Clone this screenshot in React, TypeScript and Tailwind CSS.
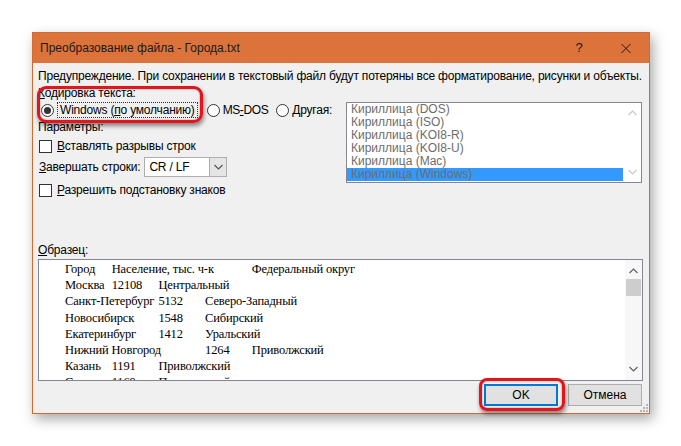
import React from 'react';

const ui = { fontFamily: '"Liberation Sans", Arial, sans-serif' };
const serif = { fontFamily: '"Liberation Serif", "Times New Roman", serif' };

const encodings = [
  'Кириллица (DOS)',
  'Кириллица (ISO)',
  'Кириллица (KOI8-R)',
  'Кириллица (KOI8-U)',
  'Кириллица (Mac)',
  'Кириллица (Windows)',
];

// each cell: [text, how many tab columns it takes]
const TAB = 46.7;
const sampleRows: [string, number][][] = [
  [['Город', 1], ['Население, тыс. ч-к', 3], ['Федеральный округ', 0]],
  [['Москва', 1], ['12108', 1], ['Центральный', 0]],
  [['Санкт-Петербург', 2], ['5132', 1], ['Северо-Западный', 0]],
  [['Новосибирск', 2], ['1548', 1], ['Сибирский', 0]],
  [['Екатеринбург', 2], ['1412', 1], ['Уральский', 0]],
  [['Нижний Новгород', 3], ['1264', 1], ['Приволжский', 0]],
  [['Казань', 1], ['1191', 1], ['Приволжский', 0]],
  [['Самара', 1], ['1169', 1], ['Приволжский', 0]],
];

function Radio({ checked }: { checked?: boolean }) {
  return (
    <span className="flex h-[13px] w-[13px] shrink-0 items-center justify-center rounded-full border border-[#333] bg-white">
      {checked && <span className="h-[7px] w-[7px] rounded-full bg-[#333]" />}
    </span>
  );
}

function Checkbox() {
  return <span className="block h-[13px] w-[13px] shrink-0 border border-[#333] bg-white" />;
}

function Chevron({ up, color }: { up?: boolean; color: string }) {
  return (
    <svg width="9" height="6" viewBox="0 0 9 6" className="block">
      <path d={up ? 'M0.5 5 L4.5 1 L8.5 5' : 'M0.5 1 L4.5 5 L8.5 1'} fill="none" stroke={color} strokeWidth="1.2" />
    </svg>
  );
}

export default function App() {
  return (
    <div className="min-h-[446px] w-[681px] bg-white pl-[32px] pt-[32px]" style={ui}>
      <div className="relative flex h-[382px] w-[618px] flex-col border border-[#d56a30] bg-[#f0f0f0] text-[12px] text-black shadow-[3px_5px_12px_rgba(0,0,0,0.35)]">
        {/* Title bar */}
        <div className="flex h-[30px] shrink-0 items-center bg-[#dc733b] pl-[7px]">
          <span className="flex-1 text-[12px] text-[#1a1a1a]">Преобразование файла - Города.txt</span>
          <span className="w-[20px] text-center text-[13px] text-[#1a1a1a]">?</span>
          <span className="ml-[32px] mr-[18px] flex w-[10px] justify-center">
            <svg width="11" height="11" viewBox="0 0 11 11" className="block">
              <path d="M0.5 0.5 L10.5 10.5 M10.5 0.5 L0.5 10.5" stroke="#111" strokeWidth="1" />
            </svg>
          </span>
        </div>

        {/* Body */}
        <div className="flex flex-1 flex-col pl-[5px] pr-[6px] tracking-[-0.2px]">
          <div className="mt-[6px] h-[15px] leading-[15px] whitespace-nowrap">
            Предупреждение. При сохранении в текстовый файл будут потеряны все форматирование, рисунки и объекты.
          </div>
          <div className="mt-[2px] h-[15px] leading-[15px]">
            <span className="underline">К</span>одировка текста:
          </div>

          <div className="mt-[1px] flex">
            <div className="w-[308px] shrink-0">
              {/* Radio row */}
              <div className="flex h-[16px] items-center whitespace-nowrap">
                <span className="ml-[3px]"><Radio checked /></span>
                <span className="ml-[3px] flex h-[16px] shrink-0 items-center border border-dotted border-[#333] px-[2px]">
                  Windows (<span className="underline">п</span>о умолчанию)
                </span>
                <span className="ml-[9px]"><Radio /></span>
                <span className="ml-[3px] tracking-[-0.4px]">MS<span className="underline">-</span>DOS</span>
                <span className="ml-[8px]"><Radio /></span>
                <span className="ml-[3px]"><span className="underline">Д</span>ругая:</span>
              </div>
              <div className="mt-[2px] h-[15px] leading-[15px]">Параметры:</div>
              <div className="mt-[4px] flex h-[14px] items-center whitespace-nowrap">
                <span className="ml-[1px]"><Checkbox /></span>
                <span className="ml-[5px]"><span className="underline">В</span>ставлять разрывы строк</span>
              </div>
              <div className="mt-[4px] flex h-[20px] items-center whitespace-nowrap">
                <span className="ml-[1px]"><span className="underline">З</span>авершать строки:</span>
                <div className="ml-[4px] flex h-[20px] w-[83px] border border-[#adadad] bg-white">
                  <span className="flex-1 pl-[4px] leading-[18px]">CR / LF</span>
                  <span className="flex w-[17px] items-center justify-center border-l border-[#adadad] bg-[#e5e5e5]">
                    <Chevron color="#555" />
                  </span>
                </div>
              </div>
              <div className="mt-[6px] flex h-[14px] items-center whitespace-nowrap">
                <span className="ml-[1px]"><Checkbox /></span>
                <span className="ml-[5px]"><span className="underline">Р</span>азрешить подстановку знаков</span>
              </div>
            </div>

            {/* Encoding list */}
            <div className="flex h-[81px] w-[296px] border border-[#828790] bg-white">
              <div className="flex-1">
                {encodings.map((e, i) => (
                  <div
                    key={e}
                    className={
                      'h-[13px] pl-[4px] text-[12px] leading-[13px] tracking-normal whitespace-nowrap ' +
                      (i === 5 ? 'bg-[#3399ff] text-[#6d6d6d]' : 'text-[#6d6d6d]')
                    }
                  >
                    {e}
                  </div>
                ))}
              </div>
              <div className="flex w-[18px] flex-col items-center justify-between py-[7px]">
                <Chevron up color="#c8c8c8" />
                <Chevron color="#c8c8c8" />
              </div>
            </div>
          </div>

          <div className="mt-[46px] h-[15px] leading-[15px]">
            <span className="underline">О</span>бразец:
          </div>
          <div className="mt-[1px] flex h-[122px] border border-[#828790] bg-white">
            <div className="flex-1 overflow-hidden pt-[1px] pl-[26px] text-[12.5px] leading-[16.2px] tracking-[-0.15px]" style={serif}>
              {sampleRows.map((row, r) => (
                <div key={r} className="flex whitespace-nowrap">
                  {row.map(([text, cols], c) => (
                    <span key={c} className="shrink-0" style={cols ? { width: cols * TAB } : undefined}>
                      {text}
                    </span>
                  ))}
                </div>
              ))}
            </div>
            <div className="flex w-[17px] flex-col items-center bg-[#f7f7f7]">
              <span className="mt-[8px]"><Chevron up color="#606060" /></span>
              <span className="mt-[5px] h-[17px] w-[15px] bg-[#cdcdcd]" />
              <span className="mt-auto mb-[8px]"><Chevron color="#606060" /></span>
            </div>
          </div>

          {/* Buttons */}
          <div className="mt-[3px] flex justify-end gap-[10px] pr-[1px] tracking-normal">
            <div className="relative">
              <button className="h-[22px] w-[74px] border-2 border-[#0078d7] bg-[#e1e1e1] text-[12px]">OK</button>
              <span className="pointer-events-none absolute -top-[6px] -left-[5px] -right-[7px] -bottom-[5px] rounded-[8px] border-[3px] border-[#e3141c] shadow-[1px_3px_4px_rgba(0,0,0,0.45),inset_0_0_2px_rgba(0,0,0,0.4)]" />
            </div>
            <button className="h-[22px] w-[74px] border border-[#adadad] bg-[#e1e1e1] text-[12px]">Отмена</button>
          </div>
        </div>

        {/* Resize grip */}
        <svg className="absolute right-[1px] bottom-[1px]" width="8" height="8" viewBox="0 0 8 8">
          {[[6, 0], [6, 3], [3, 3], [6, 6], [3, 6], [0, 6]].map(([x, y], i) => (
            <rect key={i} x={x} y={y} width="2" height="2" fill="#b5b5b5" />
          ))}
        </svg>

        {/* Annotation around encoding choice */}
        <span className="pointer-events-none absolute top-[53px] left-[4px] h-[37px] w-[166px] rounded-[9px] border-[3px] border-[#e3141c] shadow-[1px_3px_4px_rgba(0,0,0,0.45),inset_0_0_2px_rgba(0,0,0,0.4)]" />
      </div>
    </div>
  );
}
